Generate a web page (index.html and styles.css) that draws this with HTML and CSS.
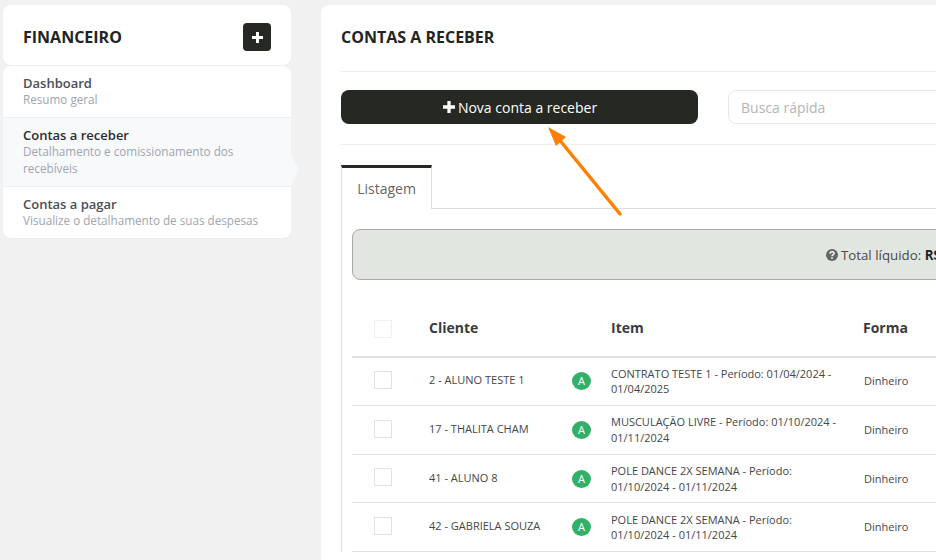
FILE: index.html
```html
<!DOCTYPE html>
<html lang="pt-BR">
<head>
<meta charset="utf-8">
<title>Contas a receber</title>
<link rel="stylesheet" href="styles.css">
</head>
<body>
<div class="page">
  <aside class="sidebar">
    <header class="side-head">
      <h2 class="side-title">FINANCEIRO</h2>
      <button class="add-btn" aria-label="Adicionar">
        <svg class="plus" width="11" height="11" viewBox="0 0 11 11"><path d="M4 0h3v4h4v3H7v4H4V7H0V4h4z"/></svg>
      </button>
    </header>
    <nav class="menu">
      <a class="menu-item"><span class="menu-name">Dashboard</span><span class="menu-sub">Resumo geral</span></a>
      <a class="menu-item active"><span class="menu-name">Contas a receber</span><span class="menu-sub">Detalhamento e comissionamento dos recebíveis</span></a>
      <a class="menu-item"><span class="menu-name">Contas a pagar</span><span class="menu-sub">Visualize o detalhamento de suas despesas</span></a>
    </nav>
  </aside>
  <main class="panel">
    <h1 class="panel-title">CONTAS A RECEBER</h1>
    <div class="toolbar">
      <button class="primary">
        <svg class="plus" width="12" height="12" viewBox="0 0 11 11"><path d="M4 0h3v4h4v3H7v4H4V7H0V4h4z"/></svg>
        Nova conta a receber
      </button>
      <input class="search" placeholder="Busca rápida">
    </div>
    <div class="tabs"><span class="tab">Listagem</span></div>
    <section class="tab-body">
      <div class="summary">
        <svg class="help" width="12" height="12" viewBox="0 0 11 11"><circle cx="5.5" cy="5.5" r="5.5" fill="#666"/><path d="M3.7 4.3c0-2.300 3.700-2.300 3.700-.2 0 1.400-1.900 1.300-1.900 2.500" fill="none" stroke="#fff" stroke-width="1.300"/><rect x="4.800" y="7.500" width="1.400" height="1.400" fill="#fff"/></svg>
        <span>Total líquido: <b>R$ 0,00</b></span>
      </div>
      <div class="table">
        <div class="row head">
          <span class="cell check"><i class="box light"></i></span>
          <span class="cell client">Cliente</span>
          <span class="cell badge-col"></span>
          <span class="cell item">Item</span>
          <span class="cell form">Forma</span>
        </div>
        <div class="row">
          <span class="cell check"><i class="box"></i></span>
          <span class="cell client">2 - ALUNO TESTE 1</span>
          <span class="cell badge-col"><i class="badge">A</i></span>
          <span class="cell item">CONTRATO TESTE 1 - Período: 01/04/2024 - 01/04/2025</span>
          <span class="cell form">Dinheiro</span>
        </div>
        <div class="row">
          <span class="cell check"><i class="box"></i></span>
          <span class="cell client">17 - THALITA CHAM</span>
          <span class="cell badge-col"><i class="badge">A</i></span>
          <span class="cell item">MUSCULAÇÃO LIVRE - Período: 01/10/2024 - 01/11/2024</span>
          <span class="cell form">Dinheiro</span>
        </div>
        <div class="row">
          <span class="cell check"><i class="box"></i></span>
          <span class="cell client">41 - ALUNO 8</span>
          <span class="cell badge-col"><i class="badge">A</i></span>
          <span class="cell item">POLE DANCE 2X SEMANA - Período: 01/10/2024 - 01/11/2024</span>
          <span class="cell form">Dinheiro</span>
        </div>
        <div class="row">
          <span class="cell check"><i class="box"></i></span>
          <span class="cell client">42 - GABRIELA SOUZA</span>
          <span class="cell badge-col"><i class="badge">A</i></span>
          <span class="cell item">POLE DANCE 2X SEMANA - Período: 01/10/2024 - 01/11/2024</span>
          <span class="cell form">Dinheiro</span>
        </div>
      </div>
    </section>
  </main>
</div>
<svg class="arrow" width="936" height="560" viewBox="0 0 936 560">
  <path d="M620 214L558 138" stroke="#ff8000" stroke-width="3.500" stroke-linecap="round" fill="none"/>
  <path d="M548 127L566 137L556 146z" fill="#ff8000"/>
</svg>
</body>
</html>
```
FILE: styles.css
```css
* { box-sizing: border-box; }
html, body { margin: 0; height: 560px; overflow: hidden; }
body { background: #f1f1f1; font-family: "Open Sans", sans-serif; color: #282a26; position: relative; }
.page { display: flex; align-items: flex-start; gap: 30px; padding: 5px 0 0 3px; width: 1520px; }
.sidebar { width: 288px; flex: none; display: flex; flex-direction: column; gap: 1px; }
.side-head { height: 60px; background: #fff; border-radius: 8px; display: flex; align-items: center; justify-content: space-between; padding: 0 20px; box-shadow: 0 1px 1px #ebeef0; }
.side-title { margin: 4px 0 0; font-size: 16px; font-weight: 700; color: #22241f; }
.add-btn { width: 28px; height: 28px; margin-top: 4px; border: 0; padding: 0; border-radius: 4px; background: #262823; display: flex; align-items: center; justify-content: center; }
.plus { fill: #fff; display: block; }
.menu { background: #fff; border-radius: 8px; display: flex; flex-direction: column; box-shadow: 0 1px 1px #ebeef0; }
.menu-item { display: block; padding: 10px 20px 9px; border-bottom: 1px solid #eef0f3; position: relative; }
.menu-item:last-child { border-bottom: 0; }
.menu-name { display: block; font-size: 13px; line-height: 15px; font-weight: 600; color: #4a4e57; }
.menu-sub { display: block; font-size: 11.7px; line-height: 17px; color: #a0a5b0; }
.active { background: #f8f9fb; }
.active .menu-name { color: #2b2d33; }
.active::after { content: ""; position: absolute; left: 100%; bottom: 0; width: 8px; height: 32px; background: #f8f9fb; clip-path: polygon(0 0, 100% 50%, 0 100%); }
.panel { width: 1154px; height: 600px; flex: none; background: #fff; border-radius: 8px; padding: 0 20px; }
.panel-title { margin: 0; height: 67px; border-bottom: 1px solid #eee; font-size: 16px; line-height: 64px; font-weight: 700; color: #22241f; }
.toolbar { display: grid; grid-template-columns: 357px 1fr; gap: 30px; padding: 18px 0 20px; border-bottom: 1px solid #eee; }
.primary { height: 34px; border: 0; border-radius: 8px; background: #262823; color: #fff; font: 400 14px "Open Sans", sans-serif; display: flex; align-items: center; justify-content: center; gap: 3px; padding: 0 0 0 1px; }
.search { height: 34px; border: 1px solid #e8e8e8; border-radius: 8px; padding: 0 12px; font: 400 14px "Open Sans", sans-serif; width: 700px; }
.search::placeholder { color: #b4b4b4; opacity: 1; }
.tabs { margin-top: 20px; height: 44px; border-bottom: 1px solid #ddd; display: flex; }
.tab { width: 91px; height: 44px; border-top: 3px solid #262823; border-left: 1px solid #ddd; border-right: 1px solid #ddd; background: #fff; font-size: 14px; line-height: 41px; text-align: center; color: #666; }
.tab-body { border-left: 1px solid #ddd; padding: 20px 10px 0; }
.summary { height: 51px; border: 1px solid #aaa; border-radius: 8px; background: #e2e6e1; display: flex; align-items: center; justify-content: center; gap: 3px; font-size: 13.3px; color: #4a4a4a; }
.summary b { color: #22241f; }
.help { display: block; }
.table { margin-top: 24px; }
.row { display: grid; grid-template-columns: 77px 143px 39px 253px 1fr; align-items: center; height: 48.6px; border-bottom: 1px solid #e2e2e2; font-size: 11px; color: #44464a; }
.head { height: 53.7px; padding-bottom: 5px; border-bottom: 2px solid #e0e0e0; font-size: 14px; font-weight: 700; color: #3a3c40; }
.head .check { padding-top: 3px; padding-bottom: 0; }
.check { padding-left: 22px; padding-bottom: 3px; }
.client { padding-bottom: 3px; }
.box { display: block; width: 18px; height: 18px; border: 1.5px solid #e2e2e2; }
.box.light { border: 1px solid #f0f0f0; }
.item { line-height: 1.42857; width: 240px; }
.form { padding-bottom: 1px; }
.head .item { padding-top: 1px; }
.head .form { margin-left: -1px; padding-bottom: 0; }
.head .client { padding-bottom: 0; }
.badge { display: block; width: 19px; height: 18px; border-radius: 50%; background: #32b06a; color: #fff; font-style: normal; font-size: 11px; line-height: 18px; text-align: center; }
.arrow { position: absolute; left: 0; top: 0; pointer-events: none; }
```
